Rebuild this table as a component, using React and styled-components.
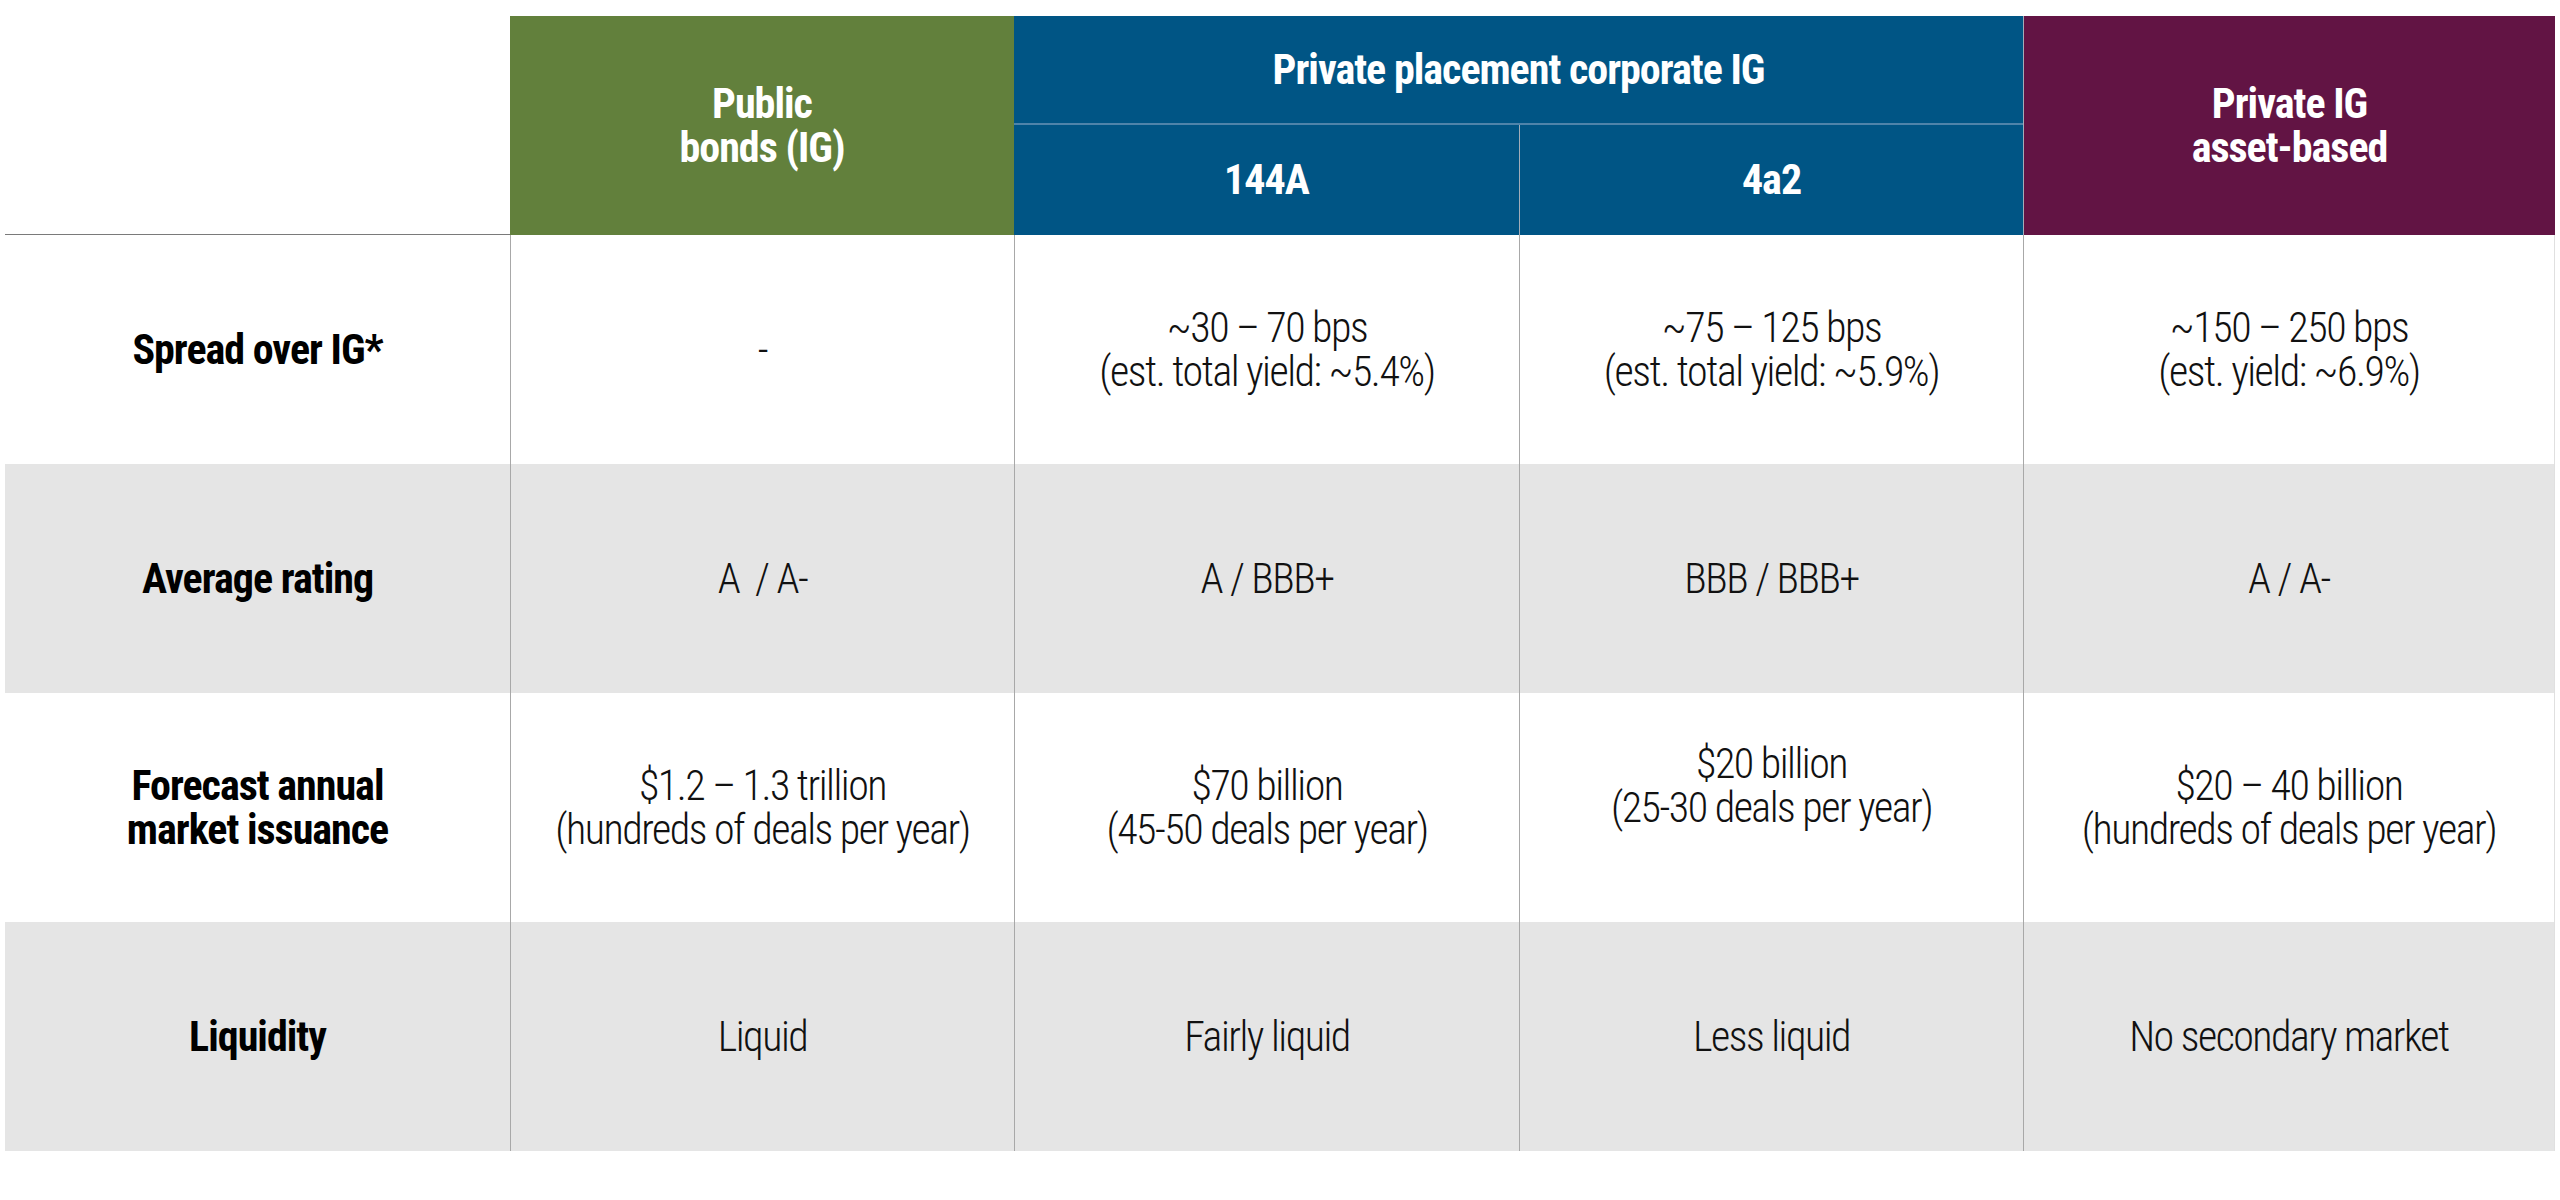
import React from "react";
import styled, { createGlobalStyle } from "styled-components";

const Global = createGlobalStyle`
  html, body { margin: 0; padding: 0; background: #ffffff; }
  body {
    font-family: "Roboto Condensed", "Liberation Sans Narrow", "DejaVu Sans Condensed", Roboto, sans-serif;
    font-stretch: condensed;
    color: #111111;
  }
`;

const Page = styled.div`
  padding: 16px 5px 50px 5px;
  width: 2550px;
`;

const Table = styled.div`
  display: grid;
  grid-template-columns: 505px 504px 505px 504px 532px;
  grid-template-rows: 109px 110px repeat(4, 229px);
`;

const Corner = styled.div`
  grid-column: 1;
  grid-row: 1 / 3;
  border-bottom: 1px solid #7a7a7a;
`;

const HeadCell = styled.div`
  grid-column: ${(p) => p.$col};
  grid-row: ${(p) => p.$row};
  background: ${(p) => p.$bg};
  color: #ffffff;
  display: flex;
  align-items: center;
  justify-content: center;
  text-align: center;
  font-weight: 700;
  font-size: 42px;
  line-height: 44px;
  letter-spacing: -1px;
  white-space: pre-line;
  border-bottom: ${(p) => (p.$divider ? "2px solid #4f84aa" : "none")};
  border-left: ${(p) => (p.$sep ? "1px solid #a3adb8" : "none")};
  box-sizing: border-box;
`;

const LabelCell = styled.div`
  background: ${(p) => (p.$shade ? "#e5e5e5" : "#ffffff")};
  display: flex;
  align-items: center;
  justify-content: center;
  text-align: center;
  font-weight: 700;
  font-size: 42px;
  line-height: 44px;
  letter-spacing: -1px;
  color: #000000;
  white-space: pre-line;
`;

const DataCell = styled.div`
  background: ${(p) => (p.$shade ? "#e5e5e5" : "#ffffff")};
  border-left: 1px solid #a8a8a8;
  display: flex;
  align-items: center;
  justify-content: center;
  text-align: center;
  font-weight: 300;
  font-size: 42px;
  line-height: 44px;
  letter-spacing: -1.5px;
  color: #111111;
  white-space: pre-wrap;
`;

const LastCell = styled(DataCell)`
  border-right: 1px solid #e0e0e0;
`;

const rows = [
  {
    label: "Spread over IG*",
    cells: [
      "-",
      "~30 – 70 bps\n(est. total yield: ~5.4%)",
      "~75 – 125 bps\n(est. total yield: ~5.9%)",
      "~150 – 250 bps\n(est. yield: ~6.9%)",
    ],
  },
  {
    label: "Average rating",
    cells: ["A  / A-", "A / BBB+", "BBB / BBB+", "A / A-"],
  },
  {
    label: "Forecast annual\nmarket issuance",
    cells: [
      "$1.2 – 1.3 trillion\n(hundreds of deals per year)",
      "$70 billion\n(45-50 deals per year)",
      "$20 billion\n(25-30 deals per year)\n ",
      "$20 – 40 billion\n(hundreds of deals per year)",
    ],
  },
  {
    label: "Liquidity",
    cells: ["Liquid", "Fairly liquid", "Less liquid", "No secondary market"],
  },
];

export default function App() {
  return (
    <Page>
      <Global />
      <Table>
        <Corner />
        <HeadCell $col="2" $row="1 / 3" $bg="#62803c">
          {"Public\nbonds (IG)"}
        </HeadCell>
        <HeadCell $col="3 / 5" $row="1" $bg="#005585" $divider>
          Private placement corporate IG
        </HeadCell>
        <HeadCell $col="3" $row="2" $bg="#005585">
          144A
        </HeadCell>
        <HeadCell $col="4" $row="2" $bg="#005585" $sep>
          4a2
        </HeadCell>
        <HeadCell $col="5" $row="1 / 3" $bg="#621444" $sep>
          {"Private IG\nasset-based"}
        </HeadCell>
        {rows.map((r, i) => (
          <React.Fragment key={r.label}>
            <LabelCell $shade={i % 2 === 1}>{r.label}</LabelCell>
            {r.cells.map((c, j) =>
              j === 3 ? (
                <LastCell key={j} $shade={i % 2 === 1}>
                  {c}
                </LastCell>
              ) : (
                <DataCell key={j} $shade={i % 2 === 1}>
                  {c}
                </DataCell>
              )
            )}
          </React.Fragment>
        ))}
      </Table>
    </Page>
  );
}
